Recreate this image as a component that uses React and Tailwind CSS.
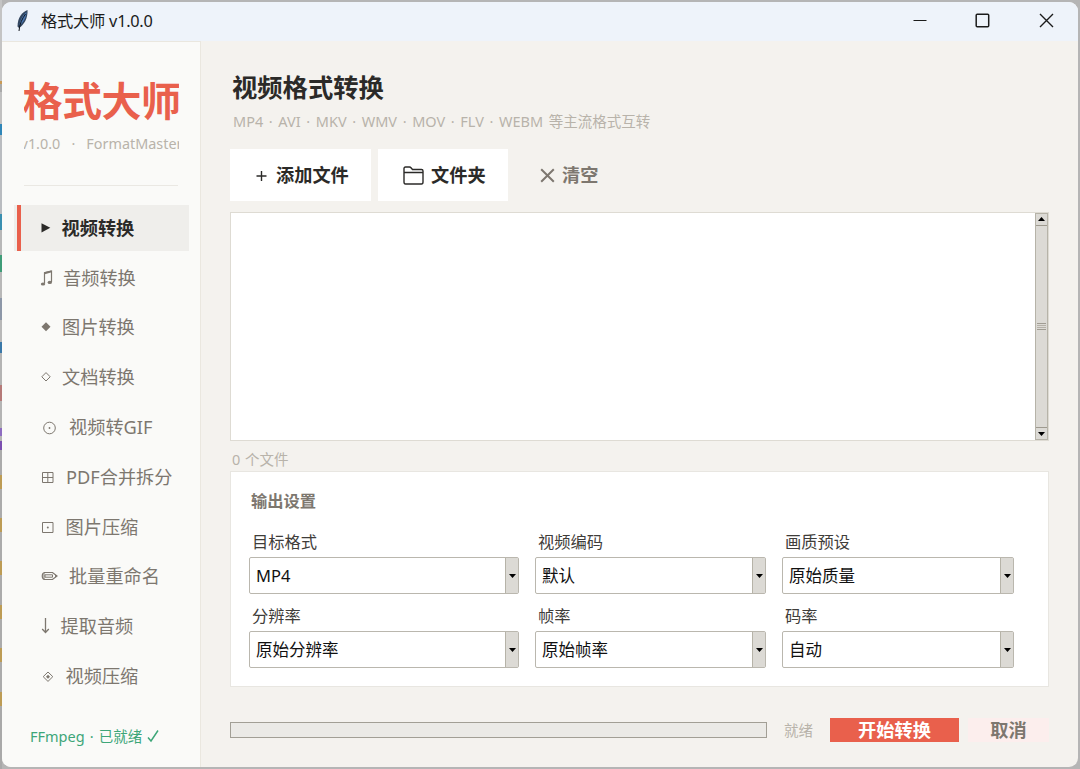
import React, { useState } from "react";

const NAV_ITEMS = [
  { id: "video", label: "视频转换", gap: "w-[21.5px]" },
  { id: "audio", label: "音频转换", gap: "w-[23px]" },
  { id: "image", label: "图片转换", gap: "w-[22px]" },
  { id: "doc", label: "文档转换", gap: "w-[22px]" },
  { id: "gif", label: "视频转GIF", gap: "w-[29px]" },
  { id: "pdf", label: "PDF合并拆分", gap: "w-[26px]" },
  { id: "compress", label: "图片压缩", gap: "w-[25.5px]" },
  { id: "rename", label: "批量重命名", gap: "w-[29px]" },
  { id: "extract", label: "提取音频", gap: "w-[20.5px]" },
  { id: "shrink", label: "视频压缩", gap: "w-[25.5px]" },
];

const SETTINGS = [
  { label: "目标格式", value: "MP4" },
  { label: "视频编码", value: "默认" },
  { label: "画质预设", value: "原始质量" },
  { label: "分辨率", value: "原始分辨率" },
  { label: "帧率", value: "原始帧率" },
  { label: "码率", value: "自动" },
];

// Desktop behind the left edge of the window: [height, colour]
const BACKDROP = [
  [81, "#c4c4c4"], [3, "#c99a55"], [8, "#a9a9a9"], [32, "#c0c0c0"], [11, "#2f86b8"], [79, "#b9bcc0"],
  [16, "#3a8fb0"], [25, "#b8b8b8"], [17, "#3f9c78"], [26, "#b8b8b8"], [22, "#8d97a8"], [22, "#b8b8b8"],
  [11, "#3a78a8"], [32, "#b4b4b4"], [16, "#b57a78"], [27, "#b4b4b4"], [8, "#8d6cc0"], [5, "#b4b4b4"],
  [9, "#7b4fb0"], [25, "#ababab"], [14, "#bd9c55"], [29, "#ababab"], [14, "#bd9c55"], [29, "#ababab"],
  [14, "#bd9c55"], [30, "#ababab"], [14, "#bd9c55"], [29, "#ababab"], [14, "#bd9c55"], [30, "#ababab"],
  [14, "#bd9c55"], [63, "#a9a9a9"],
];

function NavIcon({ id }) {
  const line = { fill: "none", stroke: "currentColor", strokeWidth: 1 };
  return (
    <svg width="18" height="20" viewBox="0 0 18 20" className="shrink-0">
      {id === "video" && <path d="M1.5 5.2v9.2L10.3 9.8z" fill="currentColor" />}
      {id === "audio" && (
        <g>
          <path d="M4.5 15.5V4.8L11.5 3v11" {...line} strokeWidth="1.2" />
          <path d="M4.5 5.2l7-1.8" {...line} strokeWidth="2" />
          <ellipse cx="3" cy="16" rx="2.2" ry="1.6" fill="currentColor" />
          <ellipse cx="9.8" cy="14.4" rx="2.2" ry="1.6" fill="currentColor" />
        </g>
      )}
      {id === "image" && <path d="M6 5.3l4.5 4.5L6 14.3 1.5 9.8z" fill="currentColor" />}
      {id === "doc" && <path d="M6 5.6l4.2 4.2L6 14 1.8 9.8z" {...line} />}
      {id === "gif" && (
        <g>
          <circle cx="9.5" cy="11" r="5.8" {...line} />
          <circle cx="9.5" cy="11" r="0.9" fill="currentColor" />
        </g>
      )}
      {id === "pdf" && <path d="M2.5 5.5H13v10H2.5zM7.8 5.5v10M2.5 10.5H13" {...line} />}
      {id === "compress" && (
        <g>
          <path d="M2.5 5.5H13v10H2.5z" {...line} />
          <circle cx="7.8" cy="10.5" r="1" fill="currentColor" />
        </g>
      )}
      {id === "rename" && (
        <g>
          <path d="M4.5 6.5h8L17 10l-4.5 3.5h-8C1.5 13 1.5 7 4.5 6.5z" {...line} strokeWidth="1.2" />
          <path d="M5 8.8h7.5v2.4H5zM4 7v6" {...line} />
          <path d="M15 8.6L17 10l-2 1.4z" fill="currentColor" />
        </g>
      )}
      {id === "extract" && <path d="M5.5 2v14.5M2.2 13l3.3 3.5L8.8 13" {...line} strokeWidth="1.3" />}
      {id === "shrink" && (
        <g>
          <path d="M8 6l4.8 4.7L8 15.4l-4.8-4.7z" {...line} />
          <path d="M8 8.7l2 2-2 2-2-2z" fill="currentColor" />
        </g>
      )}
    </svg>
  );
}

function TitleBar() {
  return (
    <header className="flex h-[39px] shrink-0 items-center bg-[#eef3fa] pb-[2px] text-[#1b1b1b]">
      <svg width="14" height="24" viewBox="0 0 14 24" className="ml-[13px]">
        <path d="M12.5 1C7 3 2.5 9 2.5 17.5L4 19c5-3 9-10 8.5-18z" fill="#33465f" />
        <path d="M11.5 3C7.5 6.5 5 11 4.3 17c4-3.5 7-8.5 7.2-14z" fill="#4a78b5" />
        <path d="M10.5 5C7 10 4.5 15 4 22" fill="none" stroke="#10151c" strokeWidth="1" />
      </svg>
      <span className="ml-[12px] text-[16.3px] leading-[20px] tracking-[-0.25px]">格式大师 v1.0.0</span>
      <div className="ml-auto flex items-center">
        <svg width="14" height="14" viewBox="0 0 14 14" className="mr-[48px]">
          <path d="M0.5 6.5h13" stroke="currentColor" strokeWidth="1.2" />
        </svg>
        <svg width="15" height="15" viewBox="0 0 15 15" className="mr-[49px]">
          <rect x="1.2" y="1.2" width="12.5" height="12.5" rx="1" fill="none" stroke="currentColor" strokeWidth="1.5" />
        </svg>
        <svg width="15" height="15" viewBox="0 0 15 15" className="mr-[24px]">
          <path d="M1 1l13 13M14 1L1 14" stroke="currentColor" strokeWidth="1.4" />
        </svg>
      </div>
    </header>
  );
}

function Sidebar({ active, onSelect }) {
  return (
    <aside className="flex w-[199px] shrink-0 flex-col border-r border-t border-[#eae7df] bg-[#fafaf8]">
      <div className="ml-[22px] flex w-[155px] shrink-0 flex-col items-center overflow-hidden">
        <div className="mt-[29px] text-[40px] leading-[60px] font-bold tracking-[-0.5px] whitespace-nowrap text-[#e9604c]">格式大师</div>
        <div className="mt-[3px] text-[14.4px] leading-[20px] [word-spacing:1.8px] whitespace-pre text-[#b8b3aa]">v1.0.0  ·  FormatMaster</div>
      </div>
      <div className="mt-[31px] ml-[22px] h-px w-[154px] shrink-0 bg-[#eae8e3]" />
      <nav className="mt-[19px] ml-[12px] flex w-[175px] flex-col gap-[4px]">
        {NAV_ITEMS.map(item => {
          const on = item.id === active;
          return (
            <button
              key={item.id}
              onClick={() => onSelect(item.id)}
              className={`flex h-[45.8px] shrink-0 items-center text-[18.2px] leading-[24px] ${
                on ? "bg-[#efeeeb] font-bold text-[#2b2a28]" : "text-[#7d776f]"
              }`}
            >
              <span className={`ml-[3px] h-full w-[4px] shrink-0 ${on ? "bg-[#e9604c]" : ""}`} />
              <span className={`ml-[19px] flex shrink-0 ${item.gap}`}>
                <NavIcon id={item.id} />
              </span>
              <span className="whitespace-nowrap">{item.label}</span>
            </button>
          );
        })}
      </nav>
      <div className="mt-[27px] ml-[28px] flex items-center text-[14.5px] leading-[20px] [word-spacing:1.3px] whitespace-nowrap text-[#3da678]">
        FFmpeg · 已就绪
        <svg width="12" height="14" viewBox="0 0 12 14" className="ml-[5px]">
          <path d="M1 8.5l3 3.5L11 1.5" fill="none" stroke="currentColor" strokeWidth="1.5" />
        </svg>
      </div>
    </aside>
  );
}

function ScrollBar() {
  return (
    <div className="flex w-[13px] flex-col border border-[#b6b3a8] bg-[#dcdad5]">
      <div className="flex h-[12px] items-center justify-center border-b border-[#9e9a8f]">
        <svg width="7" height="4" viewBox="0 0 7 4" className="mb-[2px]">
          <path d="M0 4L3.5 0 7 4z" fill="#000" />
        </svg>
      </div>
      <div className="flex flex-1 flex-col items-center justify-center gap-px">
        <i className="h-px w-[9px] bg-[#a09c92]" />
        <i className="h-px w-[9px] bg-[#b5b1a8]" />
        <i className="h-px w-[9px] bg-[#b5b1a8]" />
        <i className="h-px w-[9px] bg-[#a09c92]" />
      </div>
      <div className="flex h-[12px] items-center justify-center border-t border-[#9e9a8f]">
        <svg width="7" height="4" viewBox="0 0 7 4">
          <path d="M0 0h7L3.5 4z" fill="#000" />
        </svg>
      </div>
    </div>
  );
}

function SelectField({ label, value }) {
  return (
    <div>
      <div className="ml-[3px] text-[16.3px] leading-[24px] text-[#3f3d3a]">{label}</div>
      <div className="mt-[3px] flex h-[37px] rounded-[2px] border border-[#bab7ae] bg-white">
        <span className="flex-1 pl-[6px] text-[16.5px] leading-[35px] text-[#111]">{value}</span>
        <span className="flex w-[13px] items-center justify-center border-l border-[#b6b3a8] bg-[#dcdad5]">
          <svg width="7" height="4" viewBox="0 0 7 4">
            <path d="M0 0h7L3.5 4z" fill="#000" />
          </svg>
        </span>
      </div>
    </div>
  );
}

function Toolbar() {
  return (
    <div className="mt-[18px] flex h-[52px] text-[18.2px] leading-[24px] font-bold text-[#2b2a28]">
      <button className="flex w-[141px] items-center bg-white pl-[26px]">
        <svg width="11" height="11" viewBox="0 0 11 11" className="mr-[9px]">
          <path d="M0.5 6h10M5.5 1v10" stroke="currentColor" strokeWidth="1.4" />
        </svg>
        添加文件
      </button>
      <button className="ml-[7px] flex w-[130px] items-center bg-white pl-[25px]">
        <svg width="21" height="19" viewBox="0 0 21 19" className="mr-[7px]" fill="none" stroke="currentColor" strokeWidth="1.4">
          <path d="M1 16V2.5Q1 1 2.5 1H6.5Q7.5 1 8 1.8L9.5 3.5H18.5Q20 3.5 20 5V16Q20 18 18.5 18H2.5Q1 18 1 16z" />
          <path d="M1 6.5H20" />
        </svg>
        文件夹
      </button>
      <button className="ml-[32px] flex items-center text-[#7d776f]">
        <svg width="15" height="15" viewBox="0 0 15 15" className="mr-[7px]">
          <path d="M1.2 1.2l12.6 12.6M13.8 1.2L1.2 13.8" stroke="currentColor" strokeWidth="2" />
        </svg>
        清空
      </button>
    </div>
  );
}

export default function App() {
  const [active, setActive] = useState("video");

  return (
    <div className="flex h-[769px] w-[1080px] overflow-hidden bg-[#b5b5b5] font-['Noto_Sans','Noto_Sans_CJK_SC',sans-serif]">
      <div className="flex w-[2px] shrink-0 flex-col">
        {BACKDROP.map(([height, background], i) => (
          <div key={i} className="shrink-0" style={{ height, background }} />
        ))}
      </div>
      <div className="mt-[2px] flex h-[765px] w-[1076px] flex-col overflow-hidden rounded-[9px] bg-[#f4f2ee]">
        <TitleBar />
        <div className="flex min-h-0 flex-1">
          <Sidebar active={active} onSelect={setActive} />
          <main className="flex flex-1 flex-col pl-[29px]">
            <h1 className="mt-[28px] ml-[2px] text-[25.3px] leading-[36px] font-bold text-[#2b2a28]">视频格式转换</h1>
            <p className="mt-[6px] ml-[3px] text-[14.5px] leading-[20px] [word-spacing:1.85px] whitespace-nowrap text-[#b8b3aa]">
              MP4 · AVI · MKV · WMV · MOV · FLV · WEBM 等主流格式互转
            </p>
            <Toolbar />
            <div className="mt-[11px] flex h-[229px] w-[819px] border border-[#dedbd3] bg-white">
              <div className="flex-1" />
              <ScrollBar />
            </div>
            <div className="mt-[8px] ml-[2px] text-[14.5px] leading-[20px] [word-spacing:1px] text-[#b8b3aa]">0 个文件</div>
            <section className="mt-[2px] h-[216px] w-[819px] border border-[#e8e6e1] bg-white pl-[18px]">
              <h2 className="mt-[17px] ml-[2px] text-[16.3px] leading-[24px] font-bold text-[#7d776f]">输出设置</h2>
              <div className="mt-[17px] grid grid-cols-[270px_231px_232px] gap-x-[16px] gap-y-[10px]">
                {SETTINGS.map(s => (
                  <SelectField key={s.label} label={s.label} value={s.value} />
                ))}
              </div>
            </section>
            <footer className="mt-[30px] flex h-[25px] items-center">
              <div className="h-[16px] w-[537px] border border-[#a29f95] bg-[#ebeae6]" />
              <span className="ml-[17px] text-[14.5px] leading-[20px] text-[#b8b3aa]">就绪</span>
              <button className="ml-[17px] h-[24px] w-[129px] bg-[#e9604c] text-[18.2px] leading-[24px] font-bold text-white">开始转换</button>
              <button className="ml-[9px] h-[24px] w-[81px] bg-[#fceeed] text-[18.2px] leading-[24px] font-bold text-[#7d776f]">取消</button>
            </footer>
          </main>
        </div>
      </div>
    </div>
  );
}
